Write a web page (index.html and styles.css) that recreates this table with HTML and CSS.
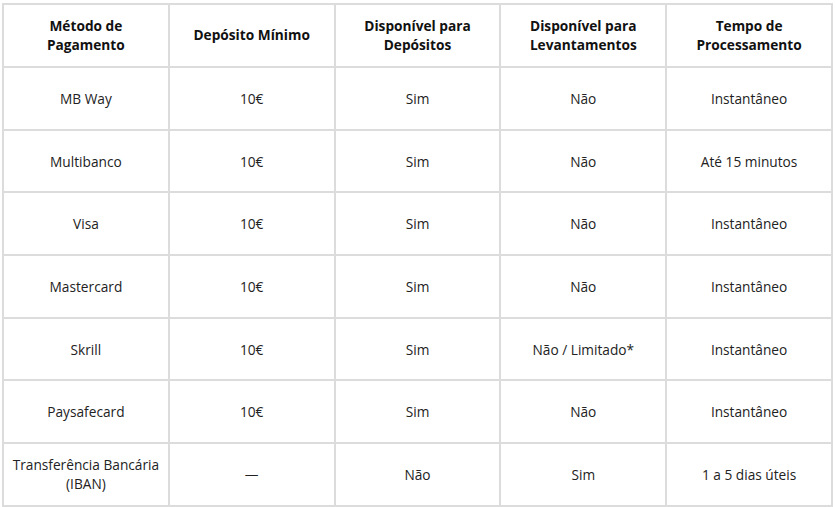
FILE: index.html
```html
<!DOCTYPE html>
<html lang="pt">
<head>
<meta charset="utf-8">
<title>Métodos de Pagamento</title>
<link rel="stylesheet" href="styles.css">
</head>
<body>
<div class="wrap">
<table class="pay">
<thead>
<tr>
<th>Método de<br>Pagamento</th>
<th>Depósito Mínimo</th>
<th>Disponível para<br>Depósitos</th>
<th>Disponível para<br>Levantamentos</th>
<th>Tempo de<br>Processamento</th>
</tr>
</thead>
<tbody>
<tr><td>MB Way</td><td>10€</td><td>Sim</td><td>Não</td><td>Instantâneo</td></tr>
<tr><td>Multibanco</td><td>10€</td><td>Sim</td><td>Não</td><td>Até 15 minutos</td></tr>
<tr><td>Visa</td><td>10€</td><td>Sim</td><td>Não</td><td>Instantâneo</td></tr>
<tr><td>Mastercard</td><td>10€</td><td>Sim</td><td>Não</td><td>Instantâneo</td></tr>
<tr><td>Skrill</td><td>10€</td><td>Sim</td><td>Não / Limitado*</td><td>Instantâneo</td></tr>
<tr><td>Paysafecard</td><td>10€</td><td>Sim</td><td>Não</td><td>Instantâneo</td></tr>
<tr><td>Transferência Bancária<br>(IBAN)</td><td>—</td><td>Não</td><td>Sim</td><td>1 a 5 dias úteis</td></tr>
</tbody>
</table>
</div>
</body>
</html>
```

FILE: styles.css
```css
html, body {
  margin: 0;
  padding: 0;
  background: #ffffff;
}
.wrap {
  padding: 3px 2px 0 2px;
}
.pay {
  width: 100%;
  table-layout: fixed;
  border-collapse: separate;
  border-spacing: 0;
  border: 1px solid #dcdcdc;
  font-family: "Open Sans", "Liberation Sans", sans-serif;
  font-size: 13.7px;
  line-height: 19px;
  color: #222222;
}
.pay th,
.pay td {
  border: 1px solid #dcdcdc;
  text-align: center;
  vertical-align: middle;
  padding: 0 4px;
}
.pay th {
  height: 59px;
  padding-bottom: 2px;
  font-weight: 700;
  color: #111111;
}
.pay td {
  height: 60.7px;
}
```
